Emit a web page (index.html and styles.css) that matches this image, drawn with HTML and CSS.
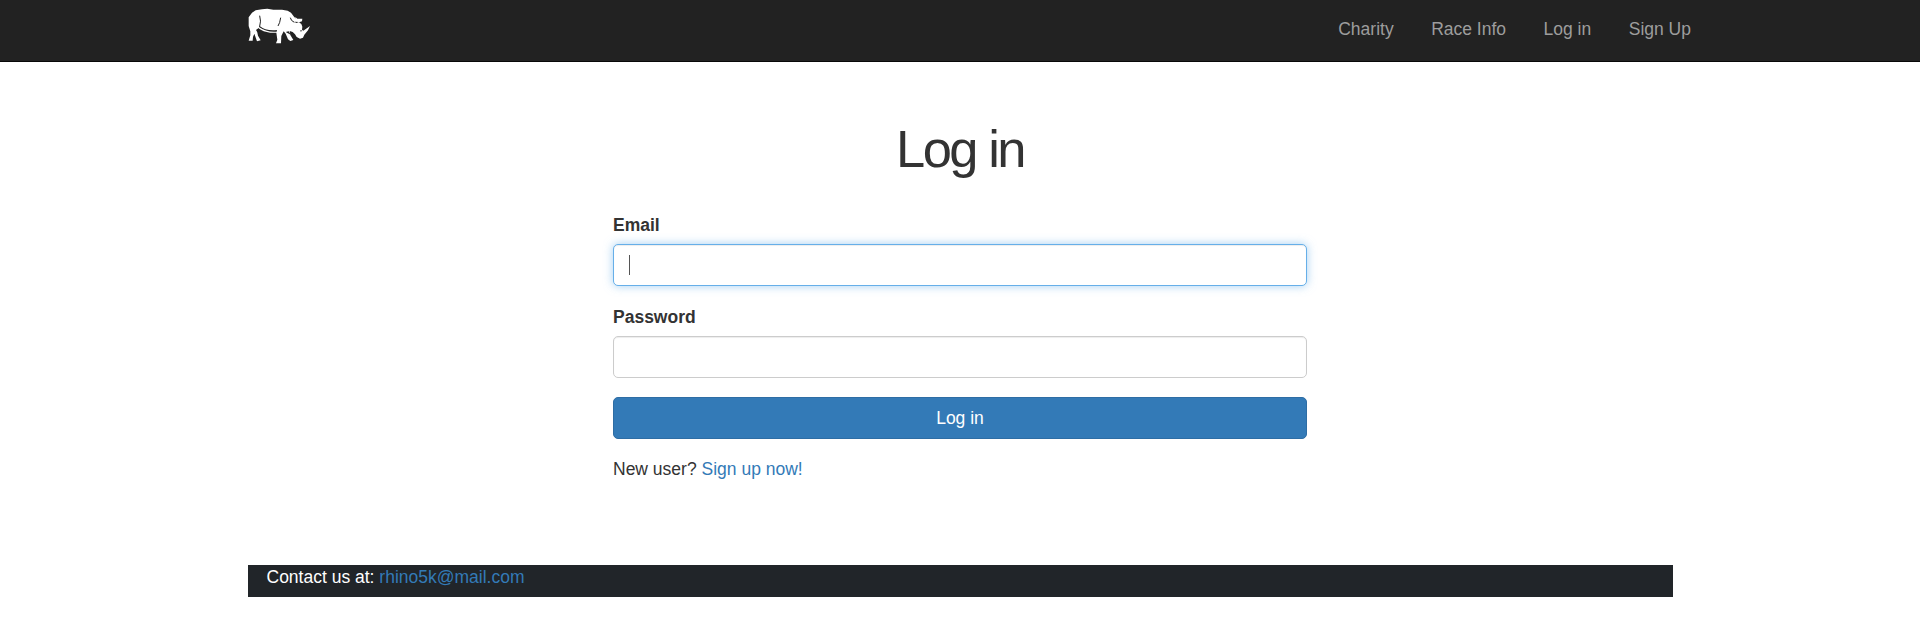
FILE: index.html
```html
<!DOCTYPE html>
<html lang="en">
<head>
<meta charset="utf-8">
<title>Log in</title>
<link rel="stylesheet" href="styles.css">
</head>
<body>
<header class="navbar">
  <div class="navbar-inner">
    <a class="logo" href="#" aria-label="Rhino 5K">
      <svg width="64" height="38" viewBox="24 21 192 114">
        <path fill="#fff" d="M26 122 L31 106 L31 94 L26 78 L26 52 L36 38 L47 31 L66 28 L82 26 L100 29 L126 29 L143 32 L153 38 L162 50 L168 56 L165 50 L172 56 L187 56 L186 64 L177 67 L184 72 L187 80 L186 89 L190 92 L210 78 L204 91 L193 104 L189 113 L180 116 L170 111 L165 103 L158 96 L149 93 L151 105 L160 120 L151 123 L144 118 L137 101 L131 94 L124 108 L123 130 L108 130 L112 119 L109 98 L90 98 L71 94 L57 86 L51 93 L54 107 L62 121 L51 124 L43 101 L39 111 L38 122 Z"/>
        <path fill="none" stroke="#222" stroke-width="3" d="M59 47 Q64 64 59 79 M122 53 Q120 69 114 78 M151 53 Q152 62 163 67"/>
        <path fill="#222" d="M58 77 Q78 94 111 90 L110 95 Q81 98 57 81Z M163 65 L177 66 L169 69Z M137 96 L146 94 L152 104Z M48 90 L56 84 L60 91 L52 97Z M181 90 L187 92 L182 95Z"/>
      </svg>
    </a>
    <nav class="nav">
      <a href="#">Charity</a>
      <a href="#">Race Info</a>
      <a href="#">Log in</a>
      <a href="#">Sign Up</a>
    </nav>
  </div>
</header>
<div class="container">
  <main class="login">
    <h1>Log in</h1>
    <form>
      <label for="email">Email</label>
      <div class="field field-focus" id="email"><span class="caret"></span></div>
      <label for="password">Password</label>
      <input class="field" id="password" type="password">
      <button class="button" type="button">Log in</button>
    </form>
    <p class="signup">New user? <a href="#">Sign up now!</a></p>
  </main>
  <footer class="footer">Contact us at: <a href="#">rhino5k@mail.com</a></footer>
</div>
</body>
</html>
```
FILE: styles.css
```css
* { box-sizing: border-box; }
body {
  margin: 0;
  background: #fff;
  color: #333;
  font: 17.5px/25px "Liberation Sans", Arial, sans-serif;
}
a { color: #337ab7; text-decoration: none; }
.navbar {
  height: 62px;
  background: #222;
  border-bottom: 1px solid #080808;
}
.navbar-inner {
  display: flex;
  justify-content: space-between;
  width: 1462px;
  margin: 0 auto;
  padding-left: 19px;
}
.logo { height: 38px; margin-top: 7px; }
.logo svg { display: block; }
.nav { display: flex; }
.nav a { padding: 17px 18.75px; color: #9d9d9d; line-height: 25px; }
.nav a:last-child { padding-right: 0; }
.container { width: 1425px; margin: 0 auto; }
.login { width: 694px; margin: 0 auto; padding-top: 58px; }
h1 {
  margin: 0 0 35px;
  font-size: 52.5px;
  font-weight: 500;
  line-height: 58px;
  letter-spacing: -2.5px;
  text-align: center;
}
form { display: flex; flex-direction: column; }
label { height: 25px; margin-bottom: 6px; font-weight: 700; }
.field {
  width: 100%;
  height: 42px;
  margin-bottom: 19px;
  padding: 0 15px;
  border: 1px solid #ccc;
  border-radius: 5px;
  background: #fff;
  box-shadow: inset 0 1px 1px rgba(0, 0, 0, .075);
}
.field-focus {
  border-color: #66afe9;
  box-shadow: inset 0 1px 1px rgba(0, 0, 0, .075), 0 0 10px rgba(102, 175, 233, .6);
}
.caret { display: block; width: 1px; height: 20px; margin-top: 10px; background: #555; }
.button {
  height: 42px;
  padding: 0;
  border: 1px solid #2e6da4;
  border-radius: 5px;
  background: #337ab7;
  color: #fff;
  font: inherit;
}
.signup { margin: 18px 0 0; }
.footer {
  height: 32px;
  margin-top: 83px;
  padding-left: 19px;
  background: #212529;
  color: #fff;
}
```
